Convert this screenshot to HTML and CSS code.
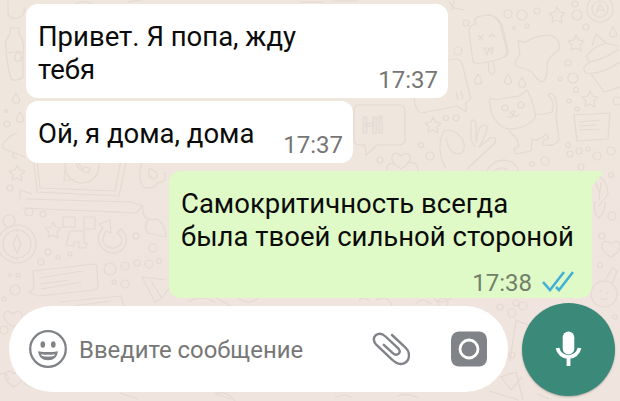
FILE: index.html
```
<!DOCTYPE html>
<html lang="ru">
<head>
    <meta charset="UTF-8">
    <meta name="viewport" content="width=device-width, initial-scale=1.0">
    <title>Чат</title>
    <link rel="stylesheet" href="styles.css">
</head>
<body>
    <svg class="wallpaper" viewBox="0 0 620 401">
        <defs>
            <path id="star" d="M0 -8 L2.5 -3 L8 -2 L4 2 L5 8 L0 5 L-5 7 L-4 2 L-8 -2 L-2 -3 Z"/>
            <path id="drop" d="M0 -5 Q6 3 2 5 Q-5 6 -3 0 Z"/>
            <path id="heart" d="M0 9 C-16 0 -8 -12 0 -4 C8 -12 16 0 0 9 Z"/>
        </defs>
        <!-- ice cream -->
        <path d="M477 17 Q473 21 476 24 Q469 25 469 31 L473 62 Q475 65 492 61 L502 58 Q508 55 506 47 L500 24 Q495 14 486 15 Z M486 15 Q498 15 502 25 L508 50 Q509 56 502 58 M488 62 L489 72 Q492 77 495 71 L493 61"/>
        <path d="M478 35 l5 5 m0 -5 l-5 5 M489 37 l3 -3 l3 3 M482 48 h12 M484 48 l3 7 l2 -7 l3 6 l1 -7"/>
        <!-- blob -->
        <path d="M518 40 Q524 44 531 39 Q543 34 553 36 Q561 41 559 50 Q549 56 547 64 Q548 80 542 82 Q537 80 532 72 Q527 69 515 66 L516 60 L520 55 Z"/>
        <!-- cat -->
        <path d="M490 98 Q498 101 505 98 L519 96 L527 90 L531 98 Q536 113 535 118 Q527 128 513 129 Q501 130 494 118 Q489 110 490 98 Z"/>
        <path d="M535 114 Q544 115 552 112 Q556 102 548 95 Q551 91 555 97 Q558 107 556 117 L559 139 Q557 147 542 145 L544 140 L549 138 L546 134 Q538 142 532 139 L531 151 L516 154 L514 149 L519 146 L517 139 L509 131"/>
        <circle cx="505" cy="108" r="3"/><circle cx="521" cy="105" r="3"/>
        <path d="M510 112 l5 -1 l-2 4 z M508 116 q3 3 5 -1 q4 3 6 -1"/>
        <!-- cupcake -->
        <path d="M592 46 L596 34 L606 43 Q595 46 589 53 Q584 57 590 62 Q605 59 619 49 M590 62 Q580 68 586 73 Q601 75 620 62 M591 74 L604 92 L620 87 M606 43 L618 46"/>
        <circle cx="600" cy="9" r="13"/><circle cx="600" cy="9" r="8"/><path d="M596 13 l4 -9 l5 8 m-7 -2 l6 0"/>
        <path d="M574 115 L610 113 L608 139 L577 141 Z M579 122 l22 -2 M579 126 l17 -1 M579 130 l20 -1"/>
        <!-- phone and leaves -->
        <path d="M449 60 Q459 57 462 63 L470 95 Q472 100 466 102 L466 112 L457 106 L422 113 Q416 113 414 98 M456 92 l2 8 m3 -9 l2 8"/>
        <path d="M446 169 Q435 148 444 131 Q455 128 463 140 Q467 151 459 154 Q449 154 446 138 M467 169 L495 143 Q498 136 490 138 L479 147 Q488 132 487 126 Q481 123 478 132 L476 142 L476 123 Q474 117 471 122 L471 140 L475 147"/>
        <path d="M487 171 Q494 157 510 161 Q516 164 519 171 M495 170 q7 -4 13 0"/>
        <path d="M359 105 H400 Q405 106 405 112 V139 Q405 145 399 145 H377 L366 155 L365 145 Q354 146 354 140 V110 Q354 105 359 105 Z"/>
        <text class="hi" x="362" y="133">Hi</text>
        <use href="#heart" x="401" y="160"/><path d="M387 170 q-1 -8 8 -6 M406 163 q12 -3 12 8"/>
        <!-- bottle and left side -->
        <path d="M8 0 V14 Q10 20 18 18 Q26 15 24 7 M10 28 H19 V34 Q25 40 23 53 V77 Q17 82 11 79 Q7 65 6 49 Q4 41 10 34 Z M8 53 q7 -2 15 0"/>
        <path d="M2 148 Q4 138 17 133 M2 148 L25 157 M13 153 q-1 6 4 5"/>
        <path d="M33 154 L37 192 L119 196 L127 157 M37 160 L40 188 L115 191 L121 160 M20 199 V190 L32 194 M22 208 L136 213 L143 206 L130 202 L26 199"/>
        <circle cx="82" cy="166" r="17"/><path d="M76 163 q5 11 13 9 l1 -4 l-5 -1 l-2 2 l-4 -5 l2 -3 l-3 -3 z M65 170 L64 181 L75 179"/>
        <path d="M142 162 Q137 177 143 187 Q155 190 157 183 Q168 182 164 172 M150 168 q-4 8 3 11 q5 0 4 -6 z"/>
        <circle cx="17" cy="244" r="19"/><circle cx="17" cy="244" r="14"/><circle cx="9" cy="221" r="6"/><path d="M17 235 L21 244 L17 253 L13 244 Z M17 229 v3 M17 257 v3"/>
        <path d="M63 217 h12 v10 h-12 z M84 217 h11 v12 h-11 z M70 231 h14 v12 h3 l-1 5 h-7 v-6 h-5 v4 l-8 -1 z"/>
        <path d="M121 229 Q131 239 123 249 Q112 258 102 248 Q94 238 103 228 L99 224 L110 220 L111 233 L106 231 Q100 240 106 246 Q114 251 121 244 Q124 238 117 233 Z"/>
        <path d="M33 271 L94 264 Q97 264 97 268 L98 286 Q98 289 94 290 L39 296 L29 293 L34 288 Z M39 278 L83 271 M40 284 L69 280 M41 289 L81 282 M60 302 L121 296 L124 306 M73 306 L111 301"/>
        <path d="M142 277 L166 280 M142 277 L155 302 L162 298 L151 281 M162 298 L170 287 M143 208 Q142 222 157 219 Q165 223 166 237 L148 233 Q143 226 148 220"/>
        <use href="#heart" x="13" y="318"/><use href="#heart" x="14" y="378"/>
        <path d="M0 374 q9 -3 8 7 M24 379 q0 8 8 8 M120 393 l18 6 M214 394 q12 -5 21 7 M216 394 l15 5"/>
        <!-- right and bottom -->
        <path d="M594 174 Q607 178 608 194 L598 207 M601 182 L599 200 M594 178 l5 14 M595 201 Q593 215 599 218 Q606 211 605 202"/>
        <use href="#heart" x="611" y="248"/><circle cx="604" cy="294" r="13"/><path d="M605 281 L612 268 L617 271 L612 284 M600 292 l2 -2 M606 294 l2 -2 M600 298 q4 3 7 0"/>
        <path d="M188 302 q14 -8 27 0 M216 298 l15 8 M238 298 q12 8 20 0 M359 301 q3 -6 10 0 M376 300 q12 -6 16 6 M416 304 q5 -8 15 0 M434 298 q5 8 18 0"/>
        <circle cx="443" cy="303" r="5"/><circle cx="500" cy="307" r="3"/><circle cx="512" cy="313" r="4"/><circle cx="523" cy="306" r="4"/><circle cx="516" cy="303" r="3"/>
        <path d="M515 320 L531 326 M516 321 L510 361 M500 377 L516 372 L523 400 M489 391 L519 400 M501 377 L511 390 L522 377 M335 398 q10 -6 17 0 M397 396 q11 -4 21 2 M537 394 l12 5"/>
        <path d="M75 4 q10 -5 17 0 M128 2 l13 -2 M300 2 h24 M333 1 h24 M449 2 L454 8 L464 10 M452 10 L454 1"/>
        <!-- small stars, drops and bubbles -->
        <use href="#star" x="557" y="15"/><use href="#star" x="576" y="43"/><use href="#star" x="590" y="99"/><use href="#star" x="433" y="125"/><use href="#star" x="17" y="173"/><use href="#star" x="53" y="230"/>
        <use href="#drop" x="18" y="56"/><use href="#drop" x="16" y="98"/><use href="#drop" x="20" y="117"/><use href="#drop" x="508" y="79"/><use href="#drop" x="522" y="82"/><use href="#drop" x="478" y="79"/><use href="#drop" x="613" y="32"/>
        <g>
            <circle cx="508" cy="14" r="4"/><circle cx="522" cy="15" r="5"/><circle cx="537" cy="11" r="3"/><circle cx="577" cy="15" r="5"/><circle cx="575" cy="4" r="3"/><circle cx="586" cy="27" r="3"/><circle cx="527" cy="26" r="2"/><circle cx="514" cy="28" r="1.5"/><circle cx="466" cy="23" r="3"/><circle cx="458" cy="51" r="4"/><circle cx="568" cy="63" r="3"/><circle cx="573" cy="78" r="5"/><circle cx="560" cy="79" r="2"/><circle cx="576" cy="90" r="2.5"/><circle cx="569" cy="101" r="2"/><circle cx="577" cy="109" r="2"/><circle cx="617" cy="101" r="4"/>
            <circle cx="446" cy="118" r="2.5"/><circle cx="456" cy="118" r="3"/><circle cx="421" cy="145" r="2.5"/><circle cx="430" cy="156" r="4"/><circle cx="380" cy="160" r="3"/><circle cx="568" cy="145" r="2.5"/><circle cx="570" cy="154" r="3"/><circle cx="579" cy="151" r="3"/><circle cx="588" cy="149" r="2"/><circle cx="597" cy="156" r="4"/><circle cx="611" cy="151" r="4"/><circle cx="545" cy="161" r="4"/><circle cx="532" cy="164" r="2.5"/><circle cx="581" cy="167" r="3"/><circle cx="611" cy="175" r="2.5"/>
            <circle cx="7" cy="124" r="3"/><circle cx="6" cy="111" r="1.5"/><circle cx="10" cy="188" r="3"/><circle cx="29" cy="212" r="4"/><circle cx="43" cy="214" r="3"/><circle cx="48" cy="252" r="3"/><circle cx="41" cy="262" r="3"/><circle cx="58" cy="257" r="2"/><circle cx="70" cy="254" r="2"/><circle cx="110" cy="269" r="6"/><circle cx="125" cy="266" r="4"/><circle cx="137" cy="263" r="3"/><circle cx="149" cy="264" r="4"/><circle cx="159" cy="261" r="2.5"/><circle cx="153" cy="248" r="4"/><circle cx="136" cy="236" r="3"/><circle cx="125" cy="284" r="4"/><circle cx="114" cy="282" r="2"/><circle cx="15" cy="290" r="5"/><circle cx="18" cy="275" r="2"/><circle cx="4" cy="299" r="2"/><circle cx="10" cy="275" r="1.5"/><circle cx="4" cy="330" r="4"/>
            <circle cx="612" cy="216" r="4"/><circle cx="602" cy="236" r="3"/><circle cx="600" cy="265" r="2.5"/><circle cx="615" cy="317" r="2"/><circle cx="512" cy="355" r="3"/>
        </g>
    </svg>

    <div class="chat">
        <div class="message incoming">
            <p>Привет. Я попа, жду<br>тебя</p>
            <span class="time">17:37</span>
        </div>
        <div class="message incoming short">
            <p>Ой, я дома, дома</p>
            <span class="time">17:37</span>
        </div>
        <div class="message outgoing">
            <p>Самокритичность всегда<br>была твоей сильной стороной</p>
            <span class="time">17:38
                <svg class="ticks" width="32" height="22" viewBox="0 0 32 22">
                    <path d="M1 12 L8 20 L22 2 M14 17 L17 20 L31 2"/>
                </svg>
            </span>
            <svg class="tail" width="14" height="16" viewBox="0 0 14 16">
                <path d="M0 0 H11 Q13 1 12 3 L2 15 H0 Z"/>
            </svg>
        </div>
    </div>

    <div class="footer">
        <div class="input">
            <svg class="smile" width="38" height="38" viewBox="0 0 38 38">
                <circle class="line" cx="19" cy="19" r="17.8"/>
                <ellipse cx="13.8" cy="14.5" rx="2.3" ry="3.2"/>
                <ellipse cx="24.3" cy="14.5" rx="2.3" ry="3.2"/>
                <path d="M9 21.2 Q19 23 29 21.2 Q28 30.2 19 30.2 Q10 30.2 9 21.2 Z"/>
                <path class="teeth" d="M12 24.2 Q19 25.4 26 24.2 L25 26 Q19 27 13 26 Z"/>
            </svg>
            <span class="placeholder">Введите сообщение</span>
            <svg class="clip" width="38" height="34" viewBox="0 0 38 34">
                <path d="M20 3 L33.5 15.5 C39 21 37.5 29 32 31.3 C28 33 24 31.5 20 27.5 L4.5 13 C1 9.5 1.2 5.5 3.8 3.2 C6.5 1 10 1.2 13.5 4.5 L26 16.2 C28 18.2 28.2 20.2 26.7 21.7 C25 23.3 22.8 23 20.8 21.2 L11.8 12.8"/>
            </svg>
            <svg class="camera" width="36" height="36" viewBox="0 0 36 36">
                <rect x="0" y="0.5" width="36" height="35" rx="8"/>
                <circle cx="18" cy="18" r="9"/>
            </svg>
        </div>
        <div class="mic">
            <svg width="28" height="36" viewBox="0 0 28 36">
                <rect x="7.7" y="0.5" width="11.6" height="23" rx="5.8"/>
                <path d="M2.5 17 A11.2 11.2 0 0 0 24.5 17 M13.5 27 V35"/>
            </svg>
        </div>
    </div>
</body>
</html>
```
FILE: styles.css
```
* {
    box-sizing: border-box;
}

body {
    display: flex;
    flex-direction: column;
    height: 401px;
    margin: 0;
    overflow: hidden;
    background: linear-gradient(to bottom, #efe7de, #f0e4de);
    font-family: Roboto, sans-serif;
}

.wallpaper {
    position: absolute;
    top: 0;
    left: 0;
    z-index: -1;
    width: 620px;
    height: 401px;
    fill: none;
    stroke: #e4dad2;
    stroke-width: 1.2;
    stroke-linejoin: round;
}

.hi {
    font-size: 22px;
    font-weight: bold;
}

.chat {
    display: flex;
    flex-direction: column;
    align-items: flex-start;
    height: 303px;
    padding: 4px 28px 0 26px;
}

.message {
    display: flex;
    justify-content: space-between;
    border-radius: 12px;
    color: #0b0b0b;
    font-size: 27.5px;
    line-height: 33px;
    white-space: nowrap;
}

.message p {
    margin: 0;
}

.incoming {
    width: 422px;
    height: 94px;
    margin-bottom: 3px;
    padding: 16px 10px 0 12px;
    background: #fff;
}

.short {
    width: 327px;
    height: 62px;
    margin-bottom: 8px;
}

.time {
    align-self: flex-end;
    padding-bottom: 1px;
    color: #767676;
    font-size: 24px;
}

.outgoing {
    position: relative;
    flex-direction: column;
    align-self: flex-end;
    width: 423px;
    height: 127px;
    padding: 16px 18px 0 12px;
    border-top-right-radius: 0;
    background: #dffac6;
}

.outgoing .time {
    display: flex;
    gap: 10px;
    padding-bottom: 0;
    margin-bottom: -2px;
    color: #71806a;
}

.ticks {
    margin-top: 3px;
    fill: none;
    stroke: #41b1d5;
    stroke-width: 2.6;
}

.tail {
    position: absolute;
    top: 0;
    right: -12px;
    fill: #dffac6;
}

.footer {
    display: flex;
    align-items: center;
    gap: 14px;
    height: 92px;
    padding-left: 9px;
}

.input {
    display: flex;
    align-items: center;
    width: 499px;
    height: 86px;
    padding: 0 21px 0 20px;
    border-radius: 43px;
    background: #fff;
    color: #777;
    font-size: 23.9px;
    fill: #808388;
}

.placeholder {
    flex: 1;
    margin-left: 12px;
    padding-top: 2px;
}

.line {
    fill: none;
    stroke: #808388;
    stroke-width: 2.3;
}

.teeth {
    fill: #fff;
}

.clip {
    margin-right: 41px;
    fill: none;
    stroke: #808388;
    stroke-width: 2.4;
    stroke-linecap: round;
}

.camera circle {
    stroke: #fff;
    stroke-width: 2.8;
}

.mic {
    display: flex;
    align-items: center;
    justify-content: center;
    width: 93px;
    height: 93px;
    border-radius: 50%;
    background: #3b8979;
    box-shadow: 0 1px 2px rgba(0, 0, 0, 0.25);
    fill: #fff;
}

.mic path {
    fill: none;
    stroke: #fff;
    stroke-width: 3.8;
}
```
